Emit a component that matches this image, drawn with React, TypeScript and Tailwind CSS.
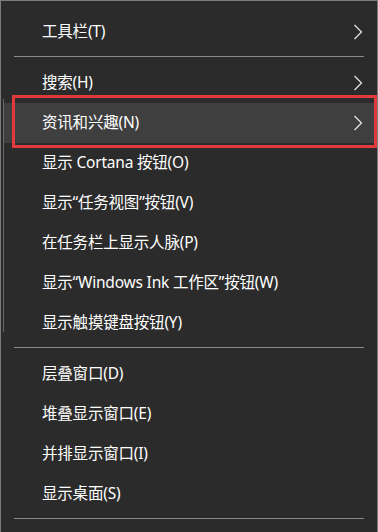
import { Fragment } from "react";

type Item = { label: string; sub?: boolean; active?: boolean };

const groups: Item[][] = [
  [{ label: "工具栏(T)", sub: true }],
  [
    { label: "搜索(H)", sub: true },
    { label: "资讯和兴趣(N)", sub: true, active: true },
    { label: "显示 Cortana 按钮(O)" },
    { label: "显示“任务视图”按钮(V)" },
    { label: "在任务栏上显示人脉(P)" },
    { label: "显示“Windows Ink 工作区”按钮(W)" },
    { label: "显示触摸键盘按钮(Y)" },
  ],
  [
    { label: "层叠窗口(D)" },
    { label: "堆叠显示窗口(E)" },
    { label: "并排显示窗口(I)" },
    { label: "显示桌面(S)" },
  ],
];

function Chevron() {
  return (
    <svg width="10" height="16" viewBox="0 0 10 16" className="shrink-0">
      <polyline points="1.5,1 8.5,8 1.5,15" fill="none" stroke="#e8e8e8" strokeWidth="1.2" />
    </svg>
  );
}

function Separator() {
  return (
    <div className="pt-[4px] pb-[6px] px-[13px]">
      <div className="h-px bg-[#8a8a8a]" />
    </div>
  );
}

export default function App() {
  return (
    <div
      className="relative w-[378px] h-[532px] overflow-hidden bg-[#2b2b2b] border-l border-t border-r border-[#7c7c7c] pt-[11px] text-white text-[15.5px] leading-none"
      style={{ fontFamily: '"Noto Sans", "Noto Sans CJK SC", sans-serif' }}
    >
      {/* window edge showing through on the left */}
      <div className="absolute left-[2px] top-[98px] w-px h-[233px] bg-[#6a6a6a]" />

      {groups.map((group, gi) => (
        <Fragment key={gi}>
          {group.map((item) => (
            <div
              key={item.label}
              className={`h-10 flex items-center justify-between pl-[39px] pr-[12px] mx-[2px] ${
                item.active ? "bg-[#3f3f3f]" : ""
              }`}
            >
              <span className="tracking-[-0.2px]">{item.label}</span>
              {item.sub && <Chevron />}
            </div>
          ))}
          <Separator />
        </Fragment>
      ))}

      {/* red highlight annotation */}
      <div className="absolute left-[11px] right-0 top-[94px] h-[53px] border-[3px] border-[#e03a3c]" />
    </div>
  );
}
